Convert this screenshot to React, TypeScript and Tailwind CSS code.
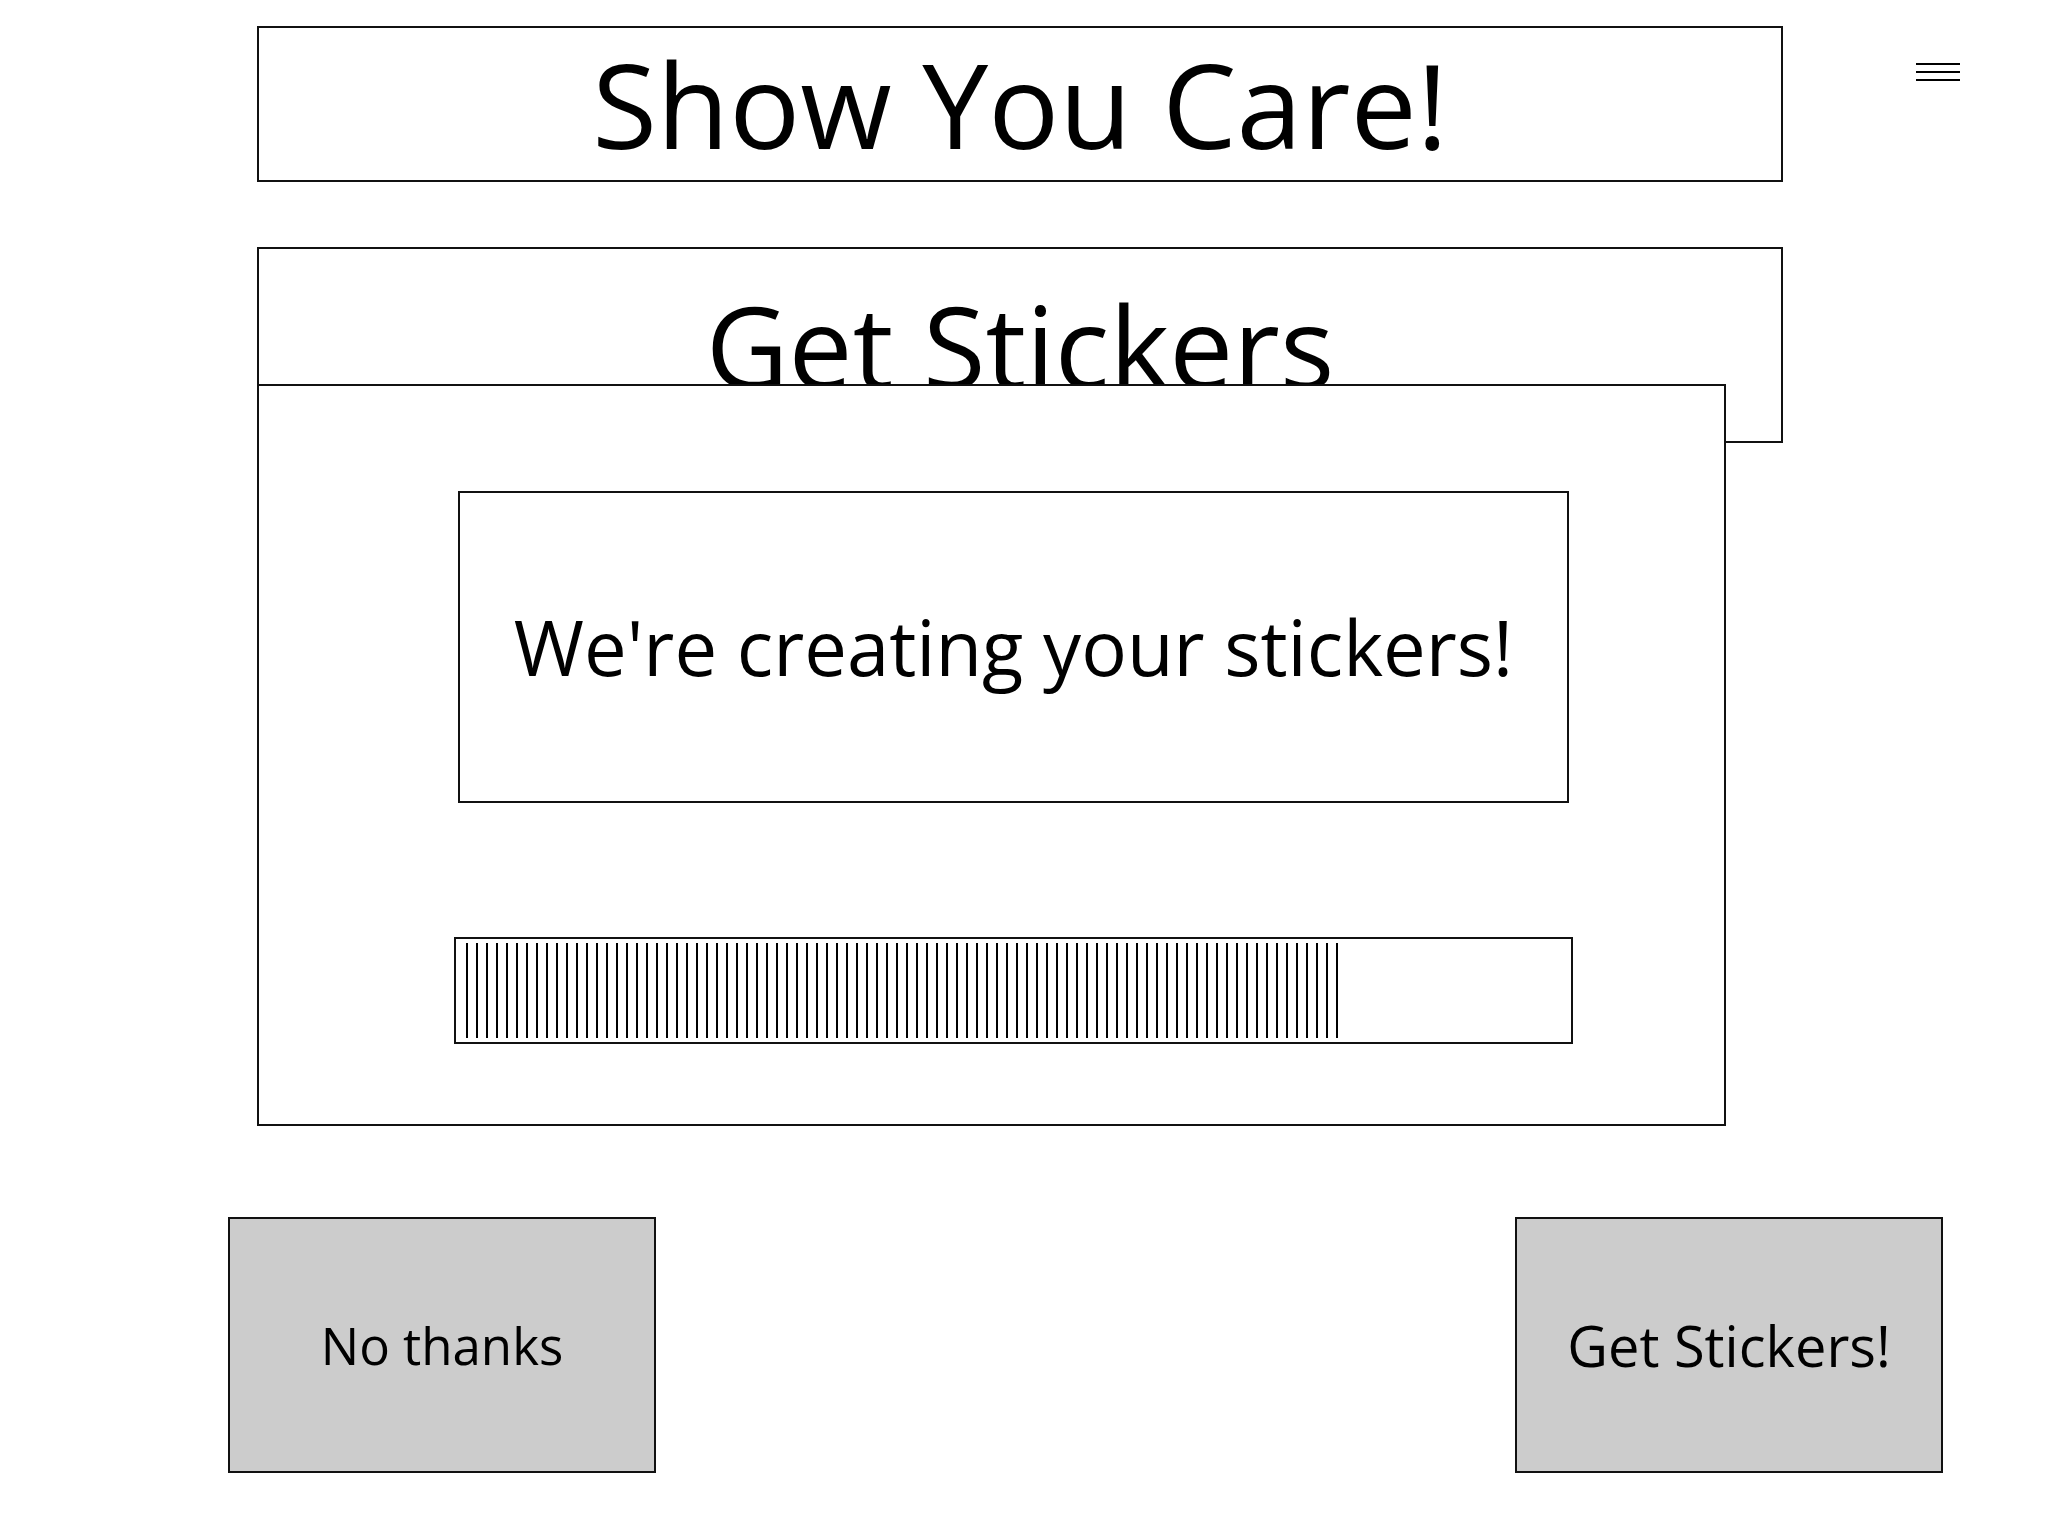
const font = { fontFamily: '"Open Sans", "Liberation Sans", sans-serif' }

const Box = ({ className = "", children }: { className?: string; children?: React.ReactNode }) => (
  <div className={`border-2 border-[#111] flex items-center justify-center ${className}`}>
    {children}
  </div>
)

const Hamburger = () => (
  <div className="flex flex-col gap-[6px] w-[44px]">
    <div className="h-[2px] bg-black"></div>
    <div className="h-[2px] bg-black"></div>
    <div className="h-[2px] bg-black"></div>
  </div>
)

const Progress = ({ value }: { value: number }) => (
  <div className="border-2 border-[#111] w-[1119px] h-[107px] pl-[10px] py-[4px] bg-white">
    <div
      className="h-full bg-[repeating-linear-gradient(90deg,#000_0px,#000_2px,transparent_2px,transparent_10px)]"
      style={{ width: `${value}%` }}
    ></div>
  </div>
)

export default function App() {
  return (
    <div className="w-[2048px] h-[1536px] bg-white text-black leading-none" style={font}>
      <div className="pt-[26px] flex items-start">
        <Box className="ml-[257px] w-[1526px] h-[156px]">
          <span className="text-[118px] leading-none">Show You Care!</span>
        </Box>
        <div className="ml-[133px] mt-[37px]">
          <Hamburger />
        </div>
      </div>

      <Box className="ml-[257px] mt-[65px] w-[1526px] h-[196px]">
        <span className="text-[114px] leading-none">Get Stickers</span>
      </Box>

      {/* loading dialog sits over the sticker box */}
      <div className="relative z-10 ml-[257px] -mt-[59px] w-[1469px] h-[742px] border-2 border-[#111] bg-white pt-[105px] pl-[195px]">
        <Box className="ml-[4px] w-[1111px] h-[312px]">
          <span className="text-[76px] leading-none">We're creating your stickers!</span>
        </Box>
        <div className="mt-[134px]">
          <Progress value={79} />
        </div>
      </div>

      <div className="mt-[91px] ml-[228px] flex gap-[859px]">
        <Box className="w-[428px] h-[256px] bg-[#cccccc]">
          <span className="text-[51px] leading-none">No thanks</span>
        </Box>
        <Box className="w-[428px] h-[256px] bg-[#cccccc]">
          <span className="text-[56px] leading-none">Get Stickers!</span>
        </Box>
      </div>
    </div>
  )
}
